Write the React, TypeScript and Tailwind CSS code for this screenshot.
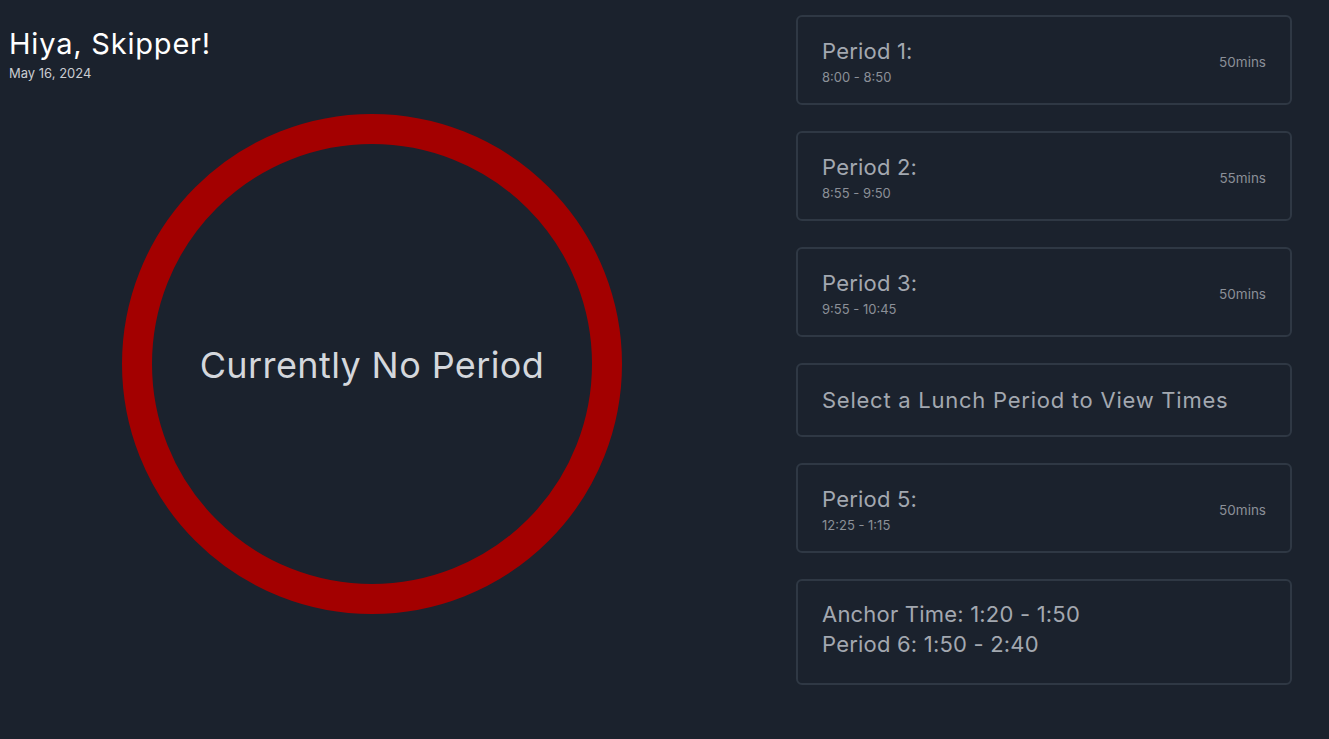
import React from "react";

const periods = [
  { name: "Period 1:", time: "8:00 - 8:50", mins: "50mins" },
  { name: "Period 2:", time: "8:55 - 9:50", mins: "55mins" },
  { name: "Period 3:", time: "9:55 - 10:45", mins: "50mins" },
];

function PeriodCard({ name, time, mins }: { name: string; time: string; mins: string }) {
  return (
    <div className="shrink-0 h-[90px] rounded-md border-2 border-[#2f3844] px-[24px] flex items-center justify-between">
      <div className="flex flex-col pt-[4px]">
        <span className="text-[22px] leading-[28px] text-[#a3a8b0] tracking-[0.2px]">{name}</span>
        <span className="mt-[2px] text-[13px] leading-[20px] text-[#8b9098]">{time}</span>
      </div>
      <span className="pt-[4px] text-[13.5px] text-[#8b9098]">{mins}</span>
    </div>
  );
}

export default function App() {
  return (
    <div
      className="min-h-screen w-full bg-[#1b222d] flex"
      style={{ fontFamily: "Inter, 'Open Sans', sans-serif" }}
    >
      {/* Left side */}
      <div className="w-[744px] flex flex-col">
        <div className="pl-[9px] pt-[25px]">
          <h1 className="text-[29px] leading-[38px] text-white tracking-[0.8px]">Hiya, Skipper!</h1>
          <p className="mt-[3px] text-[13px] leading-[14px] text-[#c9ccd1]">May 16, 2024</p>
        </div>
        <div className="flex justify-center pt-[34px]">
          <div className="w-[500px] h-[500px] rounded-full border-[30px] border-[#a30000] flex items-center justify-center">
            <span className="text-[36px] text-[#d4d7dc] tracking-[0.4px] pt-[2px]">Currently No Period</span>
          </div>
        </div>
      </div>

      {/* Right side */}
      <div className="ml-[52px] w-[496px] pt-[15px] flex flex-col gap-[26px]">
        {periods.map((p) => (
          <PeriodCard key={p.name} {...p} />
        ))}
        <div className="shrink-0 h-[74px] rounded-md border-2 border-[#2f3844] px-[24px] flex items-center">
          <span className="text-[22px] text-[#a3a8b0] tracking-[0.75px]">Select a Lunch Period to View Times</span>
        </div>
        <PeriodCard name="Period 5:" time="12:25 - 1:15" mins="50mins" />
        <div className="shrink-0 h-[106px] rounded-md border-2 border-[#2f3844] px-[24px] pb-[6px] flex flex-col justify-center">
          <span className="text-[22px] leading-[30px] text-[#a3a8b0] tracking-[0.2px]">Anchor Time: 1:20 - 1:50</span>
          <span className="text-[22px] leading-[30px] text-[#a3a8b0] tracking-[0.2px]">Period 6: 1:50 - 2:40</span>
        </div>
      </div>
    </div>
  );
}
